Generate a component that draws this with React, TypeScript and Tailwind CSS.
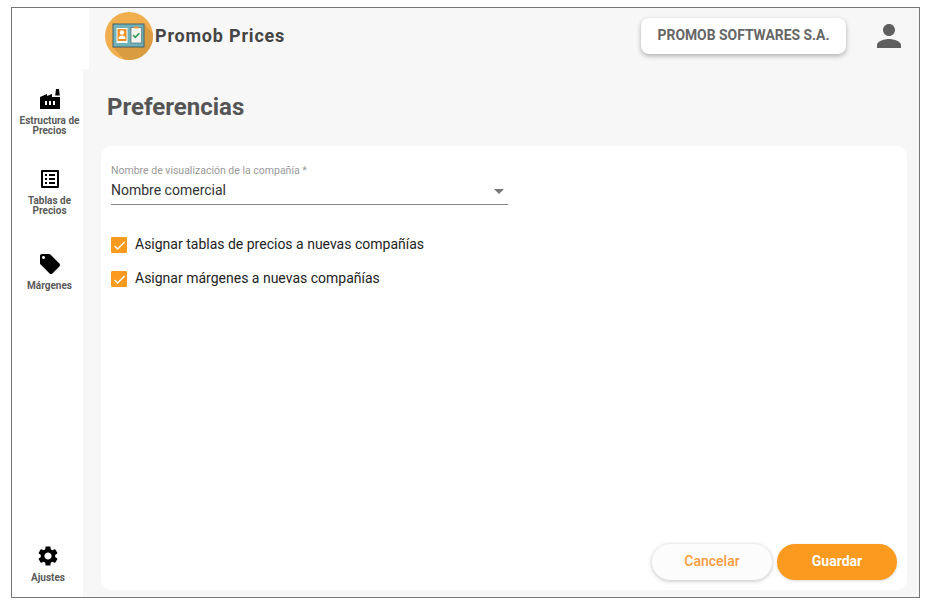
import React from "react";
import { MdFactory, MdListAlt, MdLocalOffer, MdSettings, MdPerson, MdArrowDropDown, MdCheck } from "react-icons/md";

const font = "font-['Roboto',sans-serif]";

function Logo() {
  return (
    <svg width="48" height="48" viewBox="0 0 48 48" className="shrink-0">
      <defs>
        <clipPath id="logoCircle">
          <circle cx="24" cy="24" r="24" />
        </clipPath>
      </defs>
      <circle cx="24" cy="24" r="24" fill="#f1ae4e" />
      <g clipPath="url(#logoCircle)">
        <polygon points="8,35 39,35 39,12 70,43 50,70 30,60" fill="#d99c40" />
      </g>
      <rect x="8" y="12" width="31" height="23" fill="#6fb2ba" stroke="#4b5f66" strokeWidth="1" />
      <rect x="11.5" y="16" width="11" height="15" fill="#ffffff" />
      <rect x="12.5" y="17" width="9" height="12" fill="#ee8f26" />
      <circle cx="17" cy="20.5" r="2.2" fill="#ffffff" />
      <path d="M13.5 27c0-2.5 1.5-3.5 3.5-3.5s3.5 1 3.5 3.5z" fill="#ffffff" />
      <rect x="12.5" y="29" width="9" height="1" fill="#ffffff" />
      <rect x="26" y="15.5" width="10.5" height="15.5" fill="#f4f4f0" stroke="#4b5f66" strokeWidth="0.6" />
      <rect x="29" y="14.5" width="4.5" height="2" fill="#ee9a3a" />
      <path d="M28 23l2.3 2.3 4-4" fill="none" stroke="#2f9b56" strokeWidth="1.6" />
    </svg>
  );
}

function NavItem({ icon, label, className }: { icon: React.ReactNode; label: React.ReactNode; className?: string }) {
  return (
    <div className={`flex flex-col items-center ${className ?? ""}`}>
      {icon}
      <span className="mt-[5px] text-center text-[10px] leading-[10px] font-bold text-[#5a5a5a]">{label}</span>
    </div>
  );
}

function CheckRow({ label }: { label: string }) {
  return (
    <div className="flex h-[34px] items-center">
      <span className="flex h-[16px] w-[16px] items-center justify-center rounded-[1px] bg-[#fa9a1f]">
        <MdCheck size={15} className="text-white" />
      </span>
      <span className="ml-[8px] pb-[1px] text-[14px] text-[#222222]">{label}</span>
    </div>
  );
}

export default function App() {
  return (
    <div className={`h-[612px] w-[927px] overflow-hidden bg-white pt-[7px] pl-[11px] ${font}`}>
      <div className="flex h-[591px] w-[909px] flex-col border border-[#777777] bg-white">
        <header className="flex h-[61px] shrink-0">
          <div className="w-[77px] shrink-0 bg-white" />
          <div className="flex flex-1 items-center bg-[#f7f7f7] pb-[5px] pl-[16px]">
            <Logo />
            <span className="ml-[2px] pb-[2px] text-[18px] font-bold tracking-[0.8px] text-[#444444]">Promob Prices</span>
            <div className="ml-auto flex h-[36px] w-[205px] items-center justify-center rounded-[8px] bg-white pb-[1px] text-[13.9px] font-bold text-[#666666] shadow-[0_2px_5px_rgba(0,0,0,0.3)]">
              PROMOB SOFTWARES S.A.
            </div>
            <MdPerson size={36} className="mr-[12px] ml-[25px] text-[#5f5f5f]" />
          </div>
        </header>

        <div className="flex min-h-0 flex-1">
          <aside className="flex w-[71px] shrink-0 flex-col bg-white pb-[14px] text-black">
            <NavItem
              className="mt-[18px] pl-[4px]"
              icon={<MdFactory size={24} />}
              label={<>Estructura de<br />Precios</>}
            />
            <NavItem
              className="mt-[31px] pl-[4px]"
              icon={<MdListAlt size={24} />}
              label={<>Tablas de<br />Precios</>}
            />
            <NavItem className="mt-[36px] pl-[4px]" icon={<MdLocalOffer size={24} />} label="Márgenes" />
            <NavItem className="mt-auto pl-[1px]" icon={<MdSettings size={24} />} label="Ajustes" />
          </aside>

          <main className="flex min-w-0 flex-1 flex-col bg-[#f7f7f7] pr-[12px] pb-[7px] pl-[18px]">
            <h1 className="flex h-[77px] shrink-0 items-center pb-[1px] pl-[6px] text-[24px] font-bold text-[#555555]">
              Preferencias
            </h1>
            <section className="flex min-h-0 flex-1 flex-col rounded-[10px] bg-white p-[10px] pt-[19px]">
              <div className="w-[397px] border-b border-[#888888] pb-[4px]">
                <div className="text-[10.5px] leading-[12px] text-[#999999]">Nombre de visualización de la compañía *</div>
                <div className="relative mt-[3px] text-[14px] leading-[20px] text-[#333333]">
                  Nombre comercial
                  <MdArrowDropDown size={24} className="absolute top-[-1px] right-[-3px] text-[#777777]" />
                </div>
              </div>
              <div className="mt-[23px]">
                <CheckRow label="Asignar tablas de precios a nuevas compañías" />
                <CheckRow label="Asignar márgenes a nuevas compañías" />
              </div>
              <div className="mt-auto flex justify-end gap-[5px]">
                <button className="h-[36px] w-[120px] rounded-full bg-[#fcfcfc] pb-[1px] text-[14px] font-medium text-[#fa9a3c] shadow-[0_1px_4px_rgba(0,0,0,0.25)]">
                  Cancelar
                </button>
                <button className="h-[36px] w-[120px] rounded-full bg-[#fa9a1f] pb-[1px] text-[14px] font-bold text-white shadow-[0_1px_3px_rgba(0,0,0,0.15)]">
                  Guardar
                </button>
              </div>
            </section>
          </main>
        </div>
      </div>
    </div>
  );
}
